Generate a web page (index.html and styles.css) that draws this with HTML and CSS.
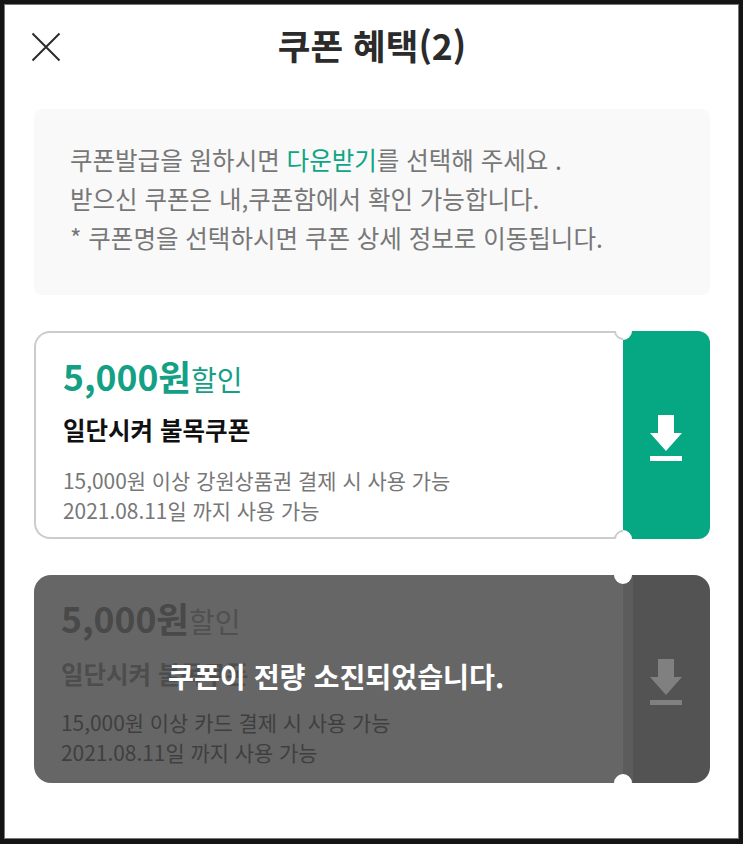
FILE: index.html
```html
<!DOCTYPE html>
<html lang="ko">
<head>
	<meta charset="utf-8">
	<meta name="viewport" content="width=device-width, initial-scale=1">
	<title>쿠폰 혜택</title>
	<link rel="stylesheet" href="styles.css">
</head>
<body>
	<div class="frame">
		<div class="head">
			<svg class="close" width="30" height="30" viewBox="0 0 30 30"><path d="M1.500 1.500L28.500 28.500M28.500 1.500L1.500 28.500"/></svg>
			<h1>쿠폰 혜택(2)</h1>
		</div>
		<div class="notice">
			<p>쿠폰발급을 원하시면 <em>다운받기</em>를 선택해 주세요 .</p>
			<p>받으신 쿠폰은 내,쿠폰함에서 확인 가능합니다.</p>
			<p>* 쿠폰명을 선택하시면 쿠폰 상세 정보로 이동됩니다.</p>
		</div>
		<div class="coupon">
			<div class="info">
				<div class="price"><b>5,000원</b><span>할인</span></div>
				<div class="name">일단시켜 불목쿠폰</div>
				<div class="desc">15,000원 이상 강원상품권 결제 시 사용 가능<br>2021.08.11일 까지 사용 가능</div>
			</div>
			<div class="stub">
				<svg class="down" width="32" height="46" viewBox="0 0 32 46"><path d="M8 0H24V18H32L16 36L0 18H8Z"/><rect y="41" width="32" height="5"/></svg>
			</div>
			<i class="notch top"></i>
			<i class="notch bottom"></i>
		</div>
		<div class="coupon off">
			<div class="info">
				<div class="price"><b>5,000원</b><span>할인</span></div>
				<div class="name">일단시켜 불목쿠폰</div>
				<div class="desc">15,000원 이상 카드 결제 시 사용 가능<br>2021.08.11일 까지 사용 가능</div>
			</div>
			<div class="stub">
				<svg class="down" width="32" height="46" viewBox="0 0 32 46"><path d="M8 0H24V18H32L16 36L0 18H8Z"/><rect y="41" width="32" height="5"/></svg>
			</div>
			<i class="notch top"></i>
			<i class="notch bottom"></i>
			<div class="soldout">쿠폰이 전량 소진되었습니다.</div>
		</div>
	</div>
</body>
</html>
```

FILE: styles.css
```css
html,body{margin: 0;height: 100%;}
body{background: #141414;font-family: "Noto Sans CJK KR", "Noto Sans", sans-serif;}
.frame{box-sizing: border-box;height: 833px;width: 733px;margin: 5px 0 0 5px;background: #fff;outline: 1px solid #777;padding: 0 28px 0 29px;overflow: hidden;}
.head{height: 104px;display: flex;align-items: flex-start;justify-content: center;position: relative;}
.head h1{margin: 16px 0 0;font-size: 35.500px;line-height: 48px;font-weight: 700;color: #2b2b2b;}
.close{position: absolute;left: -3px;top: 27px;}
.close path{fill: none;stroke: #2b2b2b;stroke-width: 2;}
.notice{box-sizing: border-box;height: 186px;background: #f9f9f9;border-radius: 8px;padding: 31px 0 0 36px;margin-bottom: 36px;}
.notice p{margin: 0;font-size: 24.500px;line-height: 39px;color: #777;}
.notice em{font-style: normal;color: #0ea585;}
.coupon{display: flex;height: 208px;position: relative;margin-bottom: 36px;}
.info{box-sizing: border-box;width: 589px;background: #fff;border: 2px solid #ccc;border-right: none;border-radius: 16px 0 0 16px;padding: 18px 0 0 27px;}
.price{display: flex;align-items: baseline;height: 50px;color: #14a085;}
.price b{font-size: 35.500px;line-height: 50px;}
.price span{font-size: 28px;line-height: 50px;}
.name{margin-top: 11px;font-size: 24.500px;line-height: 36px;font-weight: 700;color: #111;}
.desc{margin-top: 17px;font-size: 20.900px;line-height: 30px;color: #777;}
.stub{flex: 1;background: #05a882;border-radius: 0 12px 12px 0;display: flex;align-items: center;justify-content: center;padding: 6px 1px 0 0;}
.down{fill: #fff;}
.notch{box-sizing: border-box;position: absolute;left: 580px;width: 18px;height: 18px;border-radius: 50%;background: #fff;border: 2px solid transparent;}
.notch.top{top: -9px;border-bottom-color: #ccc;transform: rotate(45deg);}
.notch.bottom{bottom: -9px;border-top-color: #ccc;transform: rotate(-45deg);}
.off .info{background: #666;border: none;border-radius: 17px 0 0 17px;padding: 18px 0 0 27px;}
.off .price{color: #494949;}
.off .price span{color: #505050;}
.off .name{margin-top: 13px;color: #4d4d4d;}
.off .desc{margin-top: 15px;color: #3f3f3f;}
.off .stub{background: linear-gradient(to right, #5c5c5c 10px, #535353 10px);border-radius: 0 16px 16px 0;}
.off .down{fill: #808080;}
.off .notch{border-color: transparent;}
.soldout{position: absolute;left: 134px;top: 81px;font-size: 28.200px;line-height: 40px;font-weight: 700;color: #fff;}
```
